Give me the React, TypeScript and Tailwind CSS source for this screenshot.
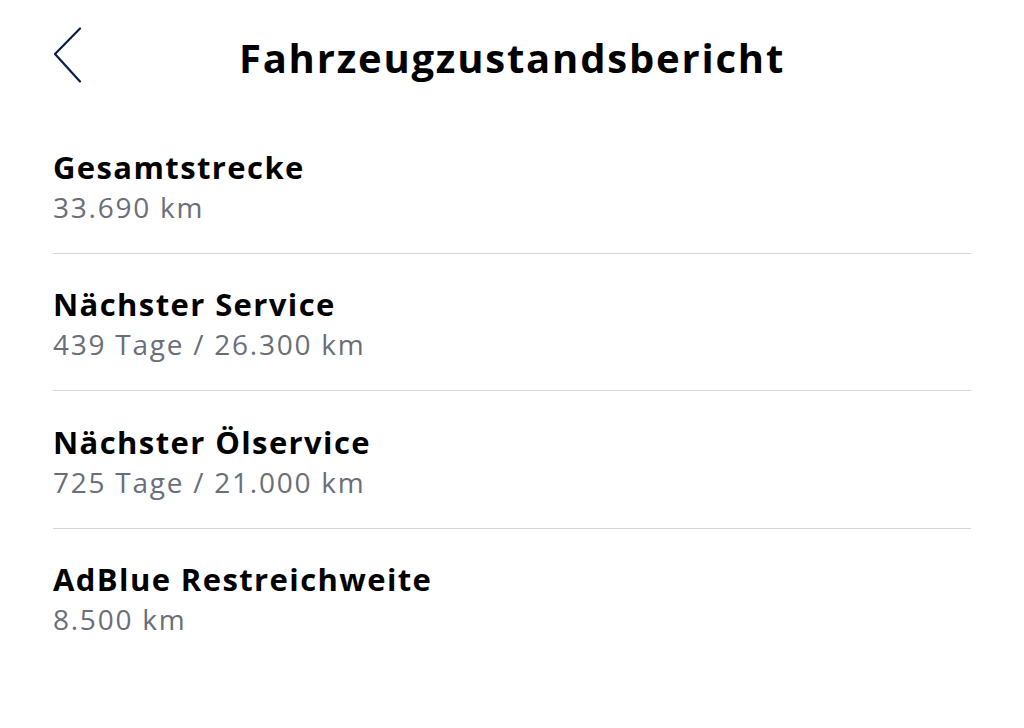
import React from 'react';

const items = [
  { label: 'Gesamtstrecke', value: '33.690 km' },
  { label: 'Nächster Service', value: '439 Tage / 26.300 km' },
  { label: 'Nächster Ölservice', value: '725 Tage / 21.000 km' },
  { label: 'AdBlue Restreichweite', value: '8.500 km' },
];

export default function App() {
  return (
    <div
      className="w-[1024px] h-[728px] bg-white overflow-hidden"
      style={{ fontFamily: '"Open Sans", "Noto Sans", sans-serif' }}
    >
      {/* Kopfzeile */}
      <div className="relative flex items-center justify-center h-[116px]">
        <button className="absolute left-[53px] top-[27px]">
          <svg width="30" height="58" viewBox="0 0 30 58" fill="none">
            <path d="M27 1.5 L2 27 L27 54.5" stroke="#0b1e4a" strokeWidth="2.2" strokeLinecap="round" strokeLinejoin="round" />
          </svg>
        </button>
        <h1 className="text-[40px] font-bold text-black tracking-[1.8px] -mt-[1px]">Fahrzeugzustandsbericht</h1>
      </div>

      {/* Liste */}
      <div className="px-[53px]">
        {items.map((item, i) => (
          <div
            key={i}
            className={`pt-[29.5px] pb-[27px] ${i < items.length - 1 ? 'border-b border-[#d4d4d6]' : ''}`}
          >
            <div className="text-[31px] leading-[40px] font-bold text-black tracking-[1.4px] mt-[1px]">{item.label}</div>
            <div className="text-[28px] leading-[40px] text-[#6a6e78] tracking-[1.75px] -mb-[1px]">{item.value}</div>
          </div>
        ))}
      </div>
    </div>
  );
}
